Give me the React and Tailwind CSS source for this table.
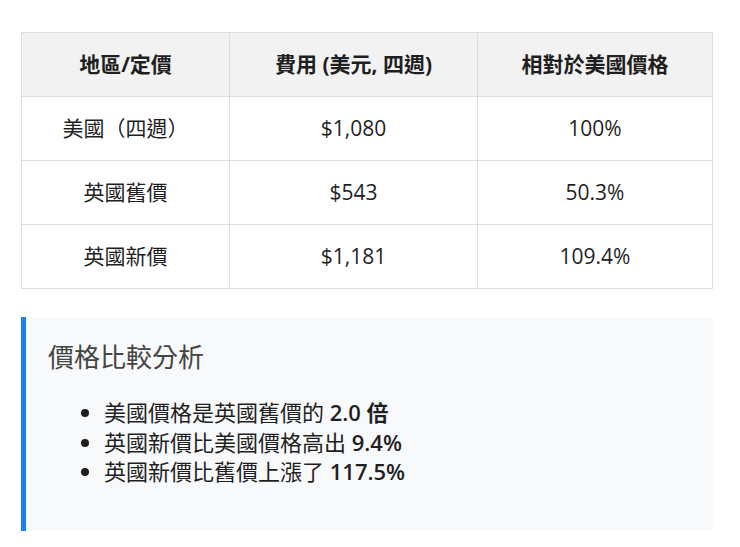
import React from "react";

const rows = [
    { region: "美國（四週）", cost: "$1,080", ratio: "100%" },
    { region: "英國舊價", cost: "$543", ratio: "50.3%" },
    { region: "英國新價", cost: "$1,181", ratio: "109.4%" },
];

export default function App() {
    return (
        <div className="min-h-[547px] bg-white px-[21px] pt-8 text-[#1f1f1f]" style={{ fontFamily: '"Open Sans", "Noto Sans CJK TC", sans-serif' }}>
            <table className="w-[692px] border-collapse text-[21px]">
                <thead>
                    <tr className="h-16 bg-[#f2f2f2]">
                        <th className="w-[208px] border border-[#dddddd] font-bold">地區/定價</th>
                        <th className="w-[248px] border border-[#dddddd] font-bold">費用 (美元, 四週)</th>
                        <th className="border border-[#dddddd] font-bold">相對於美國價格</th>
                    </tr>
                </thead>
                <tbody>
                    {rows.map((r) => (
                        <tr key={r.region} className="h-16 text-center">
                            <td className="border border-[#dddddd]">{r.region}</td>
                            <td className="border border-[#dddddd]">{r.cost}</td>
                            <td className="border border-[#dddddd]">{r.ratio}</td>
                        </tr>
                    ))}
                </tbody>
            </table>

            <div className="mt-7 h-[214px] w-[692px] border-l-[5px] border-[#1a7ff0] bg-[#f8f9fa] pl-[22px] pt-[22px]">
                <h3 className="text-[26px] leading-9 text-[#444]">價格比較分析</h3>
                <ul className="mt-[23px] list-disc pl-[56px] text-[22px] leading-[29.5px]">
                    <li>美國價格是英國舊價的 <b className="font-semibold">2.0 倍</b></li>
                    <li>英國新價比美國價格高出 <b className="font-semibold">9.4%</b></li>
                    <li>英國新價比舊價上漲了 <b className="font-semibold">117.5%</b></li>
                </ul>
            </div>
        </div>
    );
}
